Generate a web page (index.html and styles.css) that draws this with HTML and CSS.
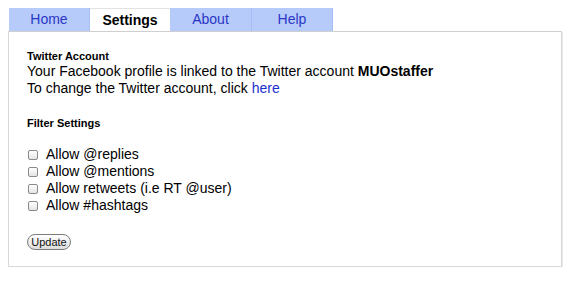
FILE: index.html
```html
<!DOCTYPE html>
<html lang='en'>
<head>
    <meta charset='UTF-8'>
    <title>Twitter Settings</title>
    <link rel="stylesheet" href="styles.css">
</head>
<body>
    <div class='page'>
        <!-- Tabs -->
        <ul class='tabs'>
            <li class='tab'>Home</li>
            <li class='tab active'>Settings</li>
            <li class='tab'>About</li>
            <li class='tab'>Help</li>
        </ul>

        <!-- Settings panel -->
        <div class='panel'>
            <h4 class='section-title'>Twitter Account</h4>
            <p class='text'>Your Facebook profile is linked to the Twitter account <b>MUOstaffer</b></p>
            <p class='text'>To change the Twitter account, click <a href='#'>here</a></p>

            <h4 class='section-title filter-title'>Filter Settings</h4>
            <div class='options'>
                <label class='option'><input type='checkbox'> Allow @replies</label>
                <label class='option'><input type='checkbox'> Allow @mentions</label>
                <label class='option'><input type='checkbox'> Allow retweets (i.e RT @user)</label>
                <label class='option'><input type='checkbox'> Allow #hashtags</label>
            </div>

            <button class='btn-update'>Update</button>
        </div>
    </div>
</body>
</html>
```

FILE: styles.css
```css
* {
    box-sizing: border-box;
    margin: 0;
    padding: 0;
    font-family: 'Liberation Sans', Arial, sans-serif;
}

body {
    background-color: #ffffff;
    color: #000000;
}

.page {
    padding: 8px 0 0 8px;
    width: 564px;
}

.tabs {
    list-style: none;
    display: flex;
    margin-left: 1px;
}

.tab {
    width: 81px;
    height: 23px;
    line-height: 23px;
    text-align: center;
    font-size: 14px;
    color: #2a36c6;
    background-color: #b7cbfa;
    border-right: 1px solid #a6bdf5;
}

.tab:nth-child(3) {
    width: 82px;
}

.tab.active {
    background-color: #ffffff;
    color: #000000;
    font-weight: bold;
    border-top: 1px solid #e2e2e2;
    border-right: none;
    line-height: 22px;
    width: 80px;
}

.panel {
    border: 1px solid #d9d9d9;
    border-top-color: #cfcfcf;
    box-shadow: 1px 1px 0 #e8e8e8;
    width: 554px;
    height: 236px;
    padding: 17px 18px 0;
}

.section-title {
    font-size: 11px;
    font-weight: bold;
    line-height: 14px;
}

.filter-title {
    margin-top: 19px;
}

.text {
    font-size: 14px;
    line-height: 17px;
}

.text a {
    color: #1b2fd0;
    text-decoration: none;
}

.options {
    margin-top: 16px;
}

.option {
    display: flex;
    align-items: center;
    font-size: 14px;
    line-height: 17px;
    height: 17px;
}

.option input {
    appearance: none;
    width: 10px;
    height: 10px;
    margin: 0 8px 0 1px;
    border: 1px solid #8a8a8a;
    border-radius: 2px;
    background: linear-gradient(#ffffff, #e4e4e4);
}

.btn-update {
    margin-top: 20px;
    width: 44px;
    height: 16px;
    font-size: 11px;
    color: #111111;
    border: 1px solid #7b7b7b;
    border-radius: 8px;
    background: linear-gradient(#ffffff, #dcdcdc);
    line-height: 13px;
}
```
